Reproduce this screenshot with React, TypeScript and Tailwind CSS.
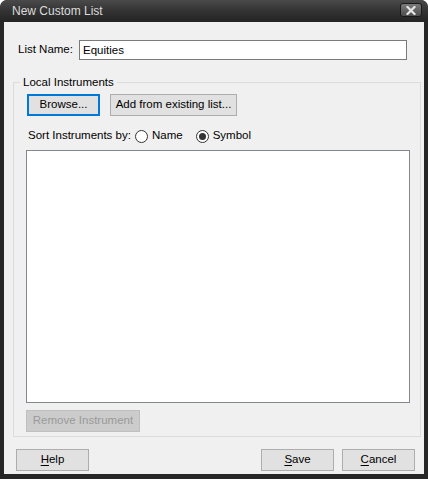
import { useState } from "react"

const font = { fontFamily: '"Liberation Sans", Arial, sans-serif' }

function Btn({ label, underline, width, focused, disabled }: { label: string; underline?: number; width: string; focused?: boolean; disabled?: boolean }) {
    const text = underline === undefined ? label : (
        <>
            {label.slice(0, underline)}
            <span className="underline underline-offset-2">{label[underline]}</span>
            {label.slice(underline + 1)}
        </>
    )
    let cls = "border border-[#adadad] bg-[#e1e1e1] text-black"
    if (focused) cls = "border-2 border-[#0078d7] bg-[#e1e1e1] text-black"
    if (disabled) cls = "border border-[#bfbfbf] bg-[#cccccc] text-[#9a9a9a]"
    return (
        <button type="button" className={`${width} h-[22px] flex items-center justify-center text-[11.5px] leading-none whitespace-nowrap ${cls}`}>
            {text}
        </button>
    )
}

function Radio({ label, checked, onClick }: { label: string; checked: boolean; onClick: () => void }) {
    return (
        <div className="flex items-center cursor-default" onClick={onClick}>
            <span className="w-[13px] h-[13px] rounded-full border border-[#333333] bg-white flex items-center justify-center">
                {checked && <span className="w-[7px] h-[7px] rounded-full bg-[#333333]" />}
            </span>
            <span className="ml-[4px]">{label}</span>
        </div>
    )
}

export default function App() {
    const [sortBy, setSortBy] = useState("symbol")
    const [listName, setListName] = useState("Equities")

    return (
        <div style={font} className="w-[428px] h-[479px] flex flex-col bg-[#262626] rounded-t-[7px] text-[11.5px] text-black overflow-hidden">
            {/* title bar */}
            <div className="h-[22px] flex items-center bg-gradient-to-b from-[#4a4a4a] via-[#333333] to-[#242424] rounded-t-[7px] pl-[12px] pr-[6px]">
                <span className="text-[#dcdcdc] text-[12px] flex-1">New Custom List</span>
                <button type="button" className="w-[22px] h-[14px] mb-[4px] mt-[2px] rounded-[3px] border border-[#1a1a1a] bg-gradient-to-b from-[#7a7a7a] to-[#4e4e4e] flex items-center justify-center">
                    <svg width="10" height="9" viewBox="0 0 10 9">
                        <path d="M1.5 1 L8.5 8 M8.5 1 L1.5 8" stroke="#e6e6e6" strokeWidth="2.2" strokeLinecap="square" />
                    </svg>
                </button>
            </div>

            {/* client area */}
            <div className="flex-1 mx-[4px] mb-[5px] bg-[#f0f0f0] flex flex-col">
                <div className="flex items-center pt-[18px] pl-[14px]">
                    <label className="w-[61px]">List Name:</label>
                    <input
                        value={listName}
                        onChange={(e) => setListName(e.target.value)}
                        className="w-[328px] h-[20px] border border-[#7a7a7a] bg-white px-[3px] text-[11.5px] outline-none"
                    />
                </div>

                <fieldset className="ml-[9px] mt-[15px] w-[408px] border border-[#dcdcdc] px-0 pt-[5px] pb-[4px]">
                    <legend className="ml-[6px] px-[3px] leading-[14px]">Local Instruments</legend>

                    <div className="flex pl-[13px] gap-[10px]">
                        <Btn label="Browse..." width="w-[73px]" focused />
                        <Btn label="Add from existing list..." width="w-[127px]" />
                    </div>

                    <div className="flex items-center mt-[13px] pl-[14px] h-[14px]">
                        <span className="w-[107px] shrink-0 whitespace-nowrap">Sort Instruments by:</span>
                        <Radio label="Name" checked={sortBy === "name"} onClick={() => setSortBy("name")} />
                        <div className="ml-[13px]">
                            <Radio label="Symbol" checked={sortBy === "symbol"} onClick={() => setSortBy("symbol")} />
                        </div>
                    </div>

                    <div className="ml-[12px] mt-[7px] w-[384px] h-[253px] border border-[#828790] bg-white" />

                    <div className="ml-[12px] mt-[7px]">
                        <Btn label="Remove Instrument" width="w-[114px]" disabled />
                    </div>
                </fieldset>

                <div className="flex mt-[12px] pl-[12px] pr-[9px]">
                    <Btn label="Help" underline={0} width="w-[73px]" />
                    <div className="flex-1" />
                    <Btn label="Save" underline={0} width="w-[73px]" />
                    <div className="ml-[8px]">
                        <Btn label="Cancel" underline={0} width="w-[73px]" />
                    </div>
                </div>
            </div>
        </div>
    )
}
